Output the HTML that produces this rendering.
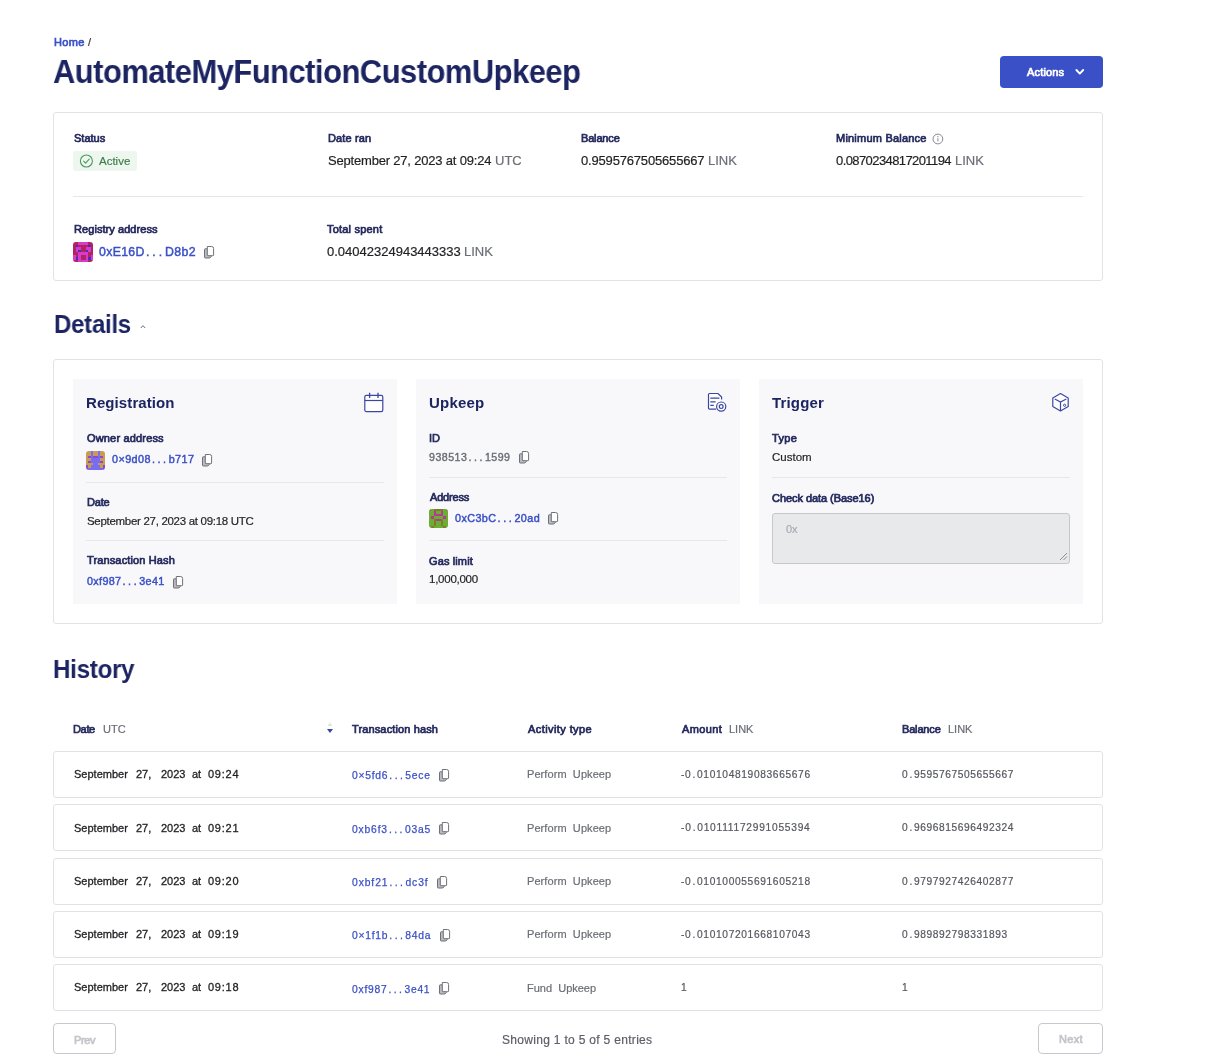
<!DOCTYPE html>
<html><head><meta charset="utf-8">
<style>
*{box-sizing:border-box;margin:0;padding:0}
html,body{width:1208px;height:1064px;overflow:hidden;background:#fff;font-family:"Liberation Sans",sans-serif;color:#1f2023}
.a{position:absolute}
.t{position:absolute;white-space:nowrap;line-height:1;will-change:transform}
.card{position:absolute;border:1px solid #e2e3e6;border-radius:3px;background:#fff}
.hr{position:absolute;height:1px;background:#e6e7eb}
.inner{position:absolute;background:#f8f8fa}
.row{position:absolute;left:53px;width:1050px;height:47px;border:1px solid #e1e2e5;border-radius:3px;background:#fff}
.btn{position:absolute;border:1px solid #c8c9ce;border-radius:4px;background:#fff}
.cp{position:absolute}
.dt{letter-spacing:0.24em;margin-left:0.1em}
.d1{letter-spacing:0.17em;margin-left:0.11em}
</style></head><body>
<div class="a" style="left:1000px;top:56px;width:103px;height:32px;background:#3a50c6;border-radius:4px"></div>
<svg class="a" style="left:1074px;top:67px" width="12" height="10" viewBox="0 0 12 10"><path d="M2.4 3 L5.8 6.6 L9.2 3" fill="none" stroke="#fff" stroke-width="1.9" stroke-linecap="round" stroke-linejoin="round"/></svg>
<div class="card" style="left:53px;top:112px;width:1050px;height:169px"></div>
<div class="a" style="left:73px;top:151px;width:64px;height:20px;background:#eef6f0;border-radius:3px"></div>
<svg class="a" style="left:79px;top:154px" width="15" height="14" viewBox="0 0 15 14"><circle cx="7.4" cy="7" r="6" fill="none" stroke="#4d9a5c" stroke-width="1.1"/><path d="M4.6 7.1 L6.6 9.1 L10.2 5.2" fill="none" stroke="#4d9a5c" stroke-width="1.1" stroke-linecap="round" stroke-linejoin="round"/></svg>
<svg class="a" style="left:932.3px;top:133px" width="12" height="12" viewBox="0 0 12 12"><circle cx="5.9" cy="6" r="4.9" fill="none" stroke="#7a7c84" stroke-width="0.9"/><path d="M5.9 5.2 V8.4" stroke="#7a7c84" stroke-width="0.9"/><circle cx="5.9" cy="3.7" r="0.6" fill="#7a7c84"/></svg>
<div class="hr" style="left:73px;top:196px;width:1010px"></div>
<svg class="a" style="left:73px;top:242px" width="20" height="20" viewBox="0 0 20 20"><defs><clipPath id="clip73_242"><rect width="20" height="20" rx="3"/></clipPath></defs><g clip-path="url(#clip73_242)" shape-rendering="crispEdges"><rect x="0.000" y="0.000" width="2.550" height="2.550" fill="#b2245e"/><rect x="2.500" y="0.000" width="2.550" height="2.550" fill="#b2245e"/><rect x="5.000" y="0.000" width="2.550" height="2.550" fill="#d83acd"/><rect x="7.500" y="0.000" width="2.550" height="2.550" fill="#d83acd"/><rect x="10.000" y="0.000" width="2.550" height="2.550" fill="#d83acd"/><rect x="12.500" y="0.000" width="2.550" height="2.550" fill="#d83acd"/><rect x="15.000" y="0.000" width="2.550" height="2.550" fill="#b2245e"/><rect x="17.500" y="0.000" width="2.550" height="2.550" fill="#b2245e"/><rect x="0.000" y="2.500" width="2.550" height="2.550" fill="#b2245e"/><rect x="2.500" y="2.500" width="2.550" height="2.550" fill="#4b2bc4"/><rect x="5.000" y="2.500" width="2.550" height="2.550" fill="#b2245e"/><rect x="7.500" y="2.500" width="2.550" height="2.550" fill="#b2245e"/><rect x="10.000" y="2.500" width="2.550" height="2.550" fill="#b2245e"/><rect x="12.500" y="2.500" width="2.550" height="2.550" fill="#b2245e"/><rect x="15.000" y="2.500" width="2.550" height="2.550" fill="#4b2bc4"/><rect x="17.500" y="2.500" width="2.550" height="2.550" fill="#b2245e"/><rect x="0.000" y="5.000" width="2.550" height="2.550" fill="#b2245e"/><rect x="2.500" y="5.000" width="2.550" height="2.550" fill="#d83acd"/><rect x="5.000" y="5.000" width="2.550" height="2.550" fill="#d83acd"/><rect x="7.500" y="5.000" width="2.550" height="2.550" fill="#b2245e"/><rect x="10.000" y="5.000" width="2.550" height="2.550" fill="#b2245e"/><rect x="12.500" y="5.000" width="2.550" height="2.550" fill="#d83acd"/><rect x="15.000" y="5.000" width="2.550" height="2.550" fill="#d83acd"/><rect x="17.500" y="5.000" width="2.550" height="2.550" fill="#b2245e"/><rect x="0.000" y="7.500" width="2.550" height="2.550" fill="#b2245e"/><rect x="2.500" y="7.500" width="2.550" height="2.550" fill="#d83acd"/><rect x="5.000" y="7.500" width="2.550" height="2.550" fill="#4b2bc4"/><rect x="7.500" y="7.500" width="2.550" height="2.550" fill="#b2245e"/><rect x="10.000" y="7.500" width="2.550" height="2.550" fill="#b2245e"/><rect x="12.500" y="7.500" width="2.550" height="2.550" fill="#4b2bc4"/><rect x="15.000" y="7.500" width="2.550" height="2.550" fill="#d83acd"/><rect x="17.500" y="7.500" width="2.550" height="2.550" fill="#b2245e"/><rect x="0.000" y="10.000" width="2.550" height="2.550" fill="#b2245e"/><rect x="2.500" y="10.000" width="2.550" height="2.550" fill="#b2245e"/><rect x="5.000" y="10.000" width="2.550" height="2.550" fill="#d83acd"/><rect x="7.500" y="10.000" width="2.550" height="2.550" fill="#d83acd"/><rect x="10.000" y="10.000" width="2.550" height="2.550" fill="#d83acd"/><rect x="12.500" y="10.000" width="2.550" height="2.550" fill="#d83acd"/><rect x="15.000" y="10.000" width="2.550" height="2.550" fill="#b2245e"/><rect x="17.500" y="10.000" width="2.550" height="2.550" fill="#b2245e"/><rect x="0.000" y="12.500" width="2.550" height="2.550" fill="#d83acd"/><rect x="2.500" y="12.500" width="2.550" height="2.550" fill="#b2245e"/><rect x="5.000" y="12.500" width="2.550" height="2.550" fill="#d83acd"/><rect x="7.500" y="12.500" width="2.550" height="2.550" fill="#b2245e"/><rect x="10.000" y="12.500" width="2.550" height="2.550" fill="#b2245e"/><rect x="12.500" y="12.500" width="2.550" height="2.550" fill="#d83acd"/><rect x="15.000" y="12.500" width="2.550" height="2.550" fill="#b2245e"/><rect x="17.500" y="12.500" width="2.550" height="2.550" fill="#d83acd"/><rect x="0.000" y="15.000" width="2.550" height="2.550" fill="#d83acd"/><rect x="2.500" y="15.000" width="2.550" height="2.550" fill="#4b2bc4"/><rect x="5.000" y="15.000" width="2.550" height="2.550" fill="#d83acd"/><rect x="7.500" y="15.000" width="2.550" height="2.550" fill="#b2245e"/><rect x="10.000" y="15.000" width="2.550" height="2.550" fill="#b2245e"/><rect x="12.500" y="15.000" width="2.550" height="2.550" fill="#d83acd"/><rect x="15.000" y="15.000" width="2.550" height="2.550" fill="#4b2bc4"/><rect x="17.500" y="15.000" width="2.550" height="2.550" fill="#d83acd"/><rect x="0.000" y="17.500" width="2.550" height="2.550" fill="#b2245e"/><rect x="2.500" y="17.500" width="2.550" height="2.550" fill="#b2245e"/><rect x="5.000" y="17.500" width="2.550" height="2.550" fill="#d83acd"/><rect x="7.500" y="17.500" width="2.550" height="2.550" fill="#d83acd"/><rect x="10.000" y="17.500" width="2.550" height="2.550" fill="#d83acd"/><rect x="12.500" y="17.500" width="2.550" height="2.550" fill="#d83acd"/><rect x="15.000" y="17.500" width="2.550" height="2.550" fill="#b2245e"/><rect x="17.500" y="17.500" width="2.550" height="2.550" fill="#b2245e"/></g></svg>
<svg class="cp" style="left:203.7px;top:245.50px" width="11" height="13" viewBox="0 0 11 13"><path d="M3.3 2.8 H1.2 Q0.5 2.8 0.5 3.5 V11.3 Q0.5 12 1.2 12 H5.8 L7.3 10.5 V9.7" fill="#b9bbc1" stroke="#6f7179" stroke-width="1"/><path d="M3.3 0.5 H7.6 Q9.6 0.5 9.6 2.5 V9.0 Q9.6 9.7 8.9 9.7 H4.0 Q3.3 9.7 3.3 9.0 Z" fill="#fff" stroke="#6f7179" stroke-width="1"/></svg>
<svg class="a" style="left:138.5px;top:322.5px" width="8" height="7" viewBox="0 0 8 7"><path d="M1.8 5 L4 2.7 L6.2 5" fill="none" stroke="#6d6f77" stroke-width="1"/></svg>
<div class="card" style="left:53px;top:359px;width:1050px;height:265px"></div>
<div class="inner" style="left:73px;top:379px;width:324px;height:225px"></div>
<div class="inner" style="left:416px;top:379px;width:324px;height:225px"></div>
<div class="inner" style="left:759px;top:379px;width:324px;height:225px"></div>
<svg class="a" style="left:363px;top:392px" width="22" height="21" viewBox="0 0 22 21"><rect x="1.8" y="3.4" width="18" height="16.2" rx="1.6" fill="#fff" stroke="#3b46a3" stroke-width="1.2"/><path d="M1.8 8.5 H19.8" stroke="#3b46a3" stroke-width="1.2"/><path d="M6.6 0.8 V6 M15 0.8 V6" stroke="#3b46a3" stroke-width="1.3"/></svg>
<svg class="a" style="left:707px;top:392px" width="21" height="21" viewBox="0 0 21 21"><path d="M9.2 17.2 H2.6 a1.1 1.1 0 0 1 -1.1 -1.1 V2.6 a1.1 1.1 0 0 1 1.1 -1.1 H11 L14.6 5.1 V7.6" fill="#fff" stroke="#3b46a3" stroke-width="1.2"/><path d="M3.3 6.2 H12.4 M3.3 9.9 H8.6 M3.3 13.4 H6.8" stroke="#3b46a3" stroke-width="1.2"/><circle cx="14.2" cy="14.6" r="4.6" fill="#fff" stroke="#3b46a3" stroke-width="1.2"/><circle cx="14.2" cy="14.6" r="1.9" fill="none" stroke="#3b46a3" stroke-width="1.2"/></svg>
<svg class="a" style="left:1051px;top:392px" width="19" height="21" viewBox="0 0 19 21"><path d="M9.5 1.5 L1.8 5.9 V14.4 L9.5 18.9 L17.2 14.4 V5.9 Z" fill="#fff" stroke="#3b46a3" stroke-width="1.2" stroke-linejoin="round"/><path d="M3.8 7 L9.5 10.1 L15.3 7 M9.5 10.1 V18.9" fill="none" stroke="#3b46a3" stroke-width="1.2"/><circle cx="13.6" cy="13.3" r="1.1" fill="none" stroke="#3b46a3" stroke-width="1"/></svg>
<div class="hr" style="left:86px;top:482px;width:298px"></div>
<div class="hr" style="left:86px;top:540px;width:298px"></div>
<div class="hr" style="left:429px;top:477px;width:298px"></div>
<div class="hr" style="left:429px;top:540px;width:298px"></div>
<div class="hr" style="left:772px;top:477px;width:298px"></div>
<svg class="a" style="left:86px;top:451px" width="19" height="19" viewBox="0 0 19 19"><defs><clipPath id="clip86_451"><rect width="19" height="19" rx="3"/></clipPath></defs><g clip-path="url(#clip86_451)" shape-rendering="crispEdges"><rect x="0.000" y="0.000" width="2.425" height="2.425" fill="#c79c55"/><rect x="2.375" y="0.000" width="2.425" height="2.425" fill="#c79c55"/><rect x="4.750" y="0.000" width="2.425" height="2.425" fill="#7a6cf0"/><rect x="7.125" y="0.000" width="2.425" height="2.425" fill="#c79c55"/><rect x="9.500" y="0.000" width="2.425" height="2.425" fill="#c79c55"/><rect x="11.875" y="0.000" width="2.425" height="2.425" fill="#7a6cf0"/><rect x="14.250" y="0.000" width="2.425" height="2.425" fill="#c79c55"/><rect x="16.625" y="0.000" width="2.425" height="2.425" fill="#c79c55"/><rect x="0.000" y="2.375" width="2.425" height="2.425" fill="#c79c55"/><rect x="2.375" y="2.375" width="2.425" height="2.425" fill="#c79c55"/><rect x="4.750" y="2.375" width="2.425" height="2.425" fill="#7a6cf0"/><rect x="7.125" y="2.375" width="2.425" height="2.425" fill="#c79c55"/><rect x="9.500" y="2.375" width="2.425" height="2.425" fill="#c79c55"/><rect x="11.875" y="2.375" width="2.425" height="2.425" fill="#7a6cf0"/><rect x="14.250" y="2.375" width="2.425" height="2.425" fill="#c79c55"/><rect x="16.625" y="2.375" width="2.425" height="2.425" fill="#c79c55"/><rect x="0.000" y="4.750" width="2.425" height="2.425" fill="#c79c55"/><rect x="2.375" y="4.750" width="2.425" height="2.425" fill="#9048d0"/><rect x="4.750" y="4.750" width="2.425" height="2.425" fill="#7a6cf0"/><rect x="7.125" y="4.750" width="2.425" height="2.425" fill="#9048d0"/><rect x="9.500" y="4.750" width="2.425" height="2.425" fill="#9048d0"/><rect x="11.875" y="4.750" width="2.425" height="2.425" fill="#7a6cf0"/><rect x="14.250" y="4.750" width="2.425" height="2.425" fill="#9048d0"/><rect x="16.625" y="4.750" width="2.425" height="2.425" fill="#c79c55"/><rect x="0.000" y="7.125" width="2.425" height="2.425" fill="#c79c55"/><rect x="2.375" y="7.125" width="2.425" height="2.425" fill="#c79c55"/><rect x="4.750" y="7.125" width="2.425" height="2.425" fill="#7a6cf0"/><rect x="7.125" y="7.125" width="2.425" height="2.425" fill="#7a6cf0"/><rect x="9.500" y="7.125" width="2.425" height="2.425" fill="#7a6cf0"/><rect x="11.875" y="7.125" width="2.425" height="2.425" fill="#7a6cf0"/><rect x="14.250" y="7.125" width="2.425" height="2.425" fill="#c79c55"/><rect x="16.625" y="7.125" width="2.425" height="2.425" fill="#c79c55"/><rect x="0.000" y="9.500" width="2.425" height="2.425" fill="#c79c55"/><rect x="2.375" y="9.500" width="2.425" height="2.425" fill="#9048d0"/><rect x="4.750" y="9.500" width="2.425" height="2.425" fill="#7a6cf0"/><rect x="7.125" y="9.500" width="2.425" height="2.425" fill="#7a6cf0"/><rect x="9.500" y="9.500" width="2.425" height="2.425" fill="#7a6cf0"/><rect x="11.875" y="9.500" width="2.425" height="2.425" fill="#7a6cf0"/><rect x="14.250" y="9.500" width="2.425" height="2.425" fill="#9048d0"/><rect x="16.625" y="9.500" width="2.425" height="2.425" fill="#c79c55"/><rect x="0.000" y="11.875" width="2.425" height="2.425" fill="#c79c55"/><rect x="2.375" y="11.875" width="2.425" height="2.425" fill="#c79c55"/><rect x="4.750" y="11.875" width="2.425" height="2.425" fill="#c79c55"/><rect x="7.125" y="11.875" width="2.425" height="2.425" fill="#7a6cf0"/><rect x="9.500" y="11.875" width="2.425" height="2.425" fill="#7a6cf0"/><rect x="11.875" y="11.875" width="2.425" height="2.425" fill="#c79c55"/><rect x="14.250" y="11.875" width="2.425" height="2.425" fill="#c79c55"/><rect x="16.625" y="11.875" width="2.425" height="2.425" fill="#c79c55"/><rect x="0.000" y="14.250" width="2.425" height="2.425" fill="#9048d0"/><rect x="2.375" y="14.250" width="2.425" height="2.425" fill="#c79c55"/><rect x="4.750" y="14.250" width="2.425" height="2.425" fill="#7a6cf0"/><rect x="7.125" y="14.250" width="2.425" height="2.425" fill="#7a6cf0"/><rect x="9.500" y="14.250" width="2.425" height="2.425" fill="#7a6cf0"/><rect x="11.875" y="14.250" width="2.425" height="2.425" fill="#7a6cf0"/><rect x="14.250" y="14.250" width="2.425" height="2.425" fill="#c79c55"/><rect x="16.625" y="14.250" width="2.425" height="2.425" fill="#9048d0"/><rect x="0.000" y="16.625" width="2.425" height="2.425" fill="#9048d0"/><rect x="2.375" y="16.625" width="2.425" height="2.425" fill="#7a6cf0"/><rect x="4.750" y="16.625" width="2.425" height="2.425" fill="#7a6cf0"/><rect x="7.125" y="16.625" width="2.425" height="2.425" fill="#7a6cf0"/><rect x="9.500" y="16.625" width="2.425" height="2.425" fill="#7a6cf0"/><rect x="11.875" y="16.625" width="2.425" height="2.425" fill="#7a6cf0"/><rect x="14.250" y="16.625" width="2.425" height="2.425" fill="#7a6cf0"/><rect x="16.625" y="16.625" width="2.425" height="2.425" fill="#9048d0"/></g></svg>
<svg class="a" style="left:429px;top:509px" width="19" height="19" viewBox="0 0 19 19"><defs><clipPath id="clip429_509"><rect width="19" height="19" rx="3"/></clipPath></defs><g clip-path="url(#clip429_509)" shape-rendering="crispEdges"><rect x="0.000" y="0.000" width="2.425" height="2.425" fill="#7f7a2c"/><rect x="2.375" y="0.000" width="2.425" height="2.425" fill="#6cad34"/><rect x="4.750" y="0.000" width="2.425" height="2.425" fill="#7f7a2c"/><rect x="7.125" y="0.000" width="2.425" height="2.425" fill="#7f7a2c"/><rect x="9.500" y="0.000" width="2.425" height="2.425" fill="#7f7a2c"/><rect x="11.875" y="0.000" width="2.425" height="2.425" fill="#7f7a2c"/><rect x="14.250" y="0.000" width="2.425" height="2.425" fill="#6cad34"/><rect x="16.625" y="0.000" width="2.425" height="2.425" fill="#7f7a2c"/><rect x="0.000" y="2.375" width="2.425" height="2.425" fill="#6cad34"/><rect x="2.375" y="2.375" width="2.425" height="2.425" fill="#6cad34"/><rect x="4.750" y="2.375" width="2.425" height="2.425" fill="#b53a94"/><rect x="7.125" y="2.375" width="2.425" height="2.425" fill="#6cad34"/><rect x="9.500" y="2.375" width="2.425" height="2.425" fill="#6cad34"/><rect x="11.875" y="2.375" width="2.425" height="2.425" fill="#b53a94"/><rect x="14.250" y="2.375" width="2.425" height="2.425" fill="#6cad34"/><rect x="16.625" y="2.375" width="2.425" height="2.425" fill="#6cad34"/><rect x="0.000" y="4.750" width="2.425" height="2.425" fill="#6cad34"/><rect x="2.375" y="4.750" width="2.425" height="2.425" fill="#6cad34"/><rect x="4.750" y="4.750" width="2.425" height="2.425" fill="#b53a94"/><rect x="7.125" y="4.750" width="2.425" height="2.425" fill="#b53a94"/><rect x="9.500" y="4.750" width="2.425" height="2.425" fill="#b53a94"/><rect x="11.875" y="4.750" width="2.425" height="2.425" fill="#b53a94"/><rect x="14.250" y="4.750" width="2.425" height="2.425" fill="#6cad34"/><rect x="16.625" y="4.750" width="2.425" height="2.425" fill="#6cad34"/><rect x="0.000" y="7.125" width="2.425" height="2.425" fill="#6cad34"/><rect x="2.375" y="7.125" width="2.425" height="2.425" fill="#b53a94"/><rect x="4.750" y="7.125" width="2.425" height="2.425" fill="#6cad34"/><rect x="7.125" y="7.125" width="2.425" height="2.425" fill="#6cad34"/><rect x="9.500" y="7.125" width="2.425" height="2.425" fill="#6cad34"/><rect x="11.875" y="7.125" width="2.425" height="2.425" fill="#6cad34"/><rect x="14.250" y="7.125" width="2.425" height="2.425" fill="#b53a94"/><rect x="16.625" y="7.125" width="2.425" height="2.425" fill="#6cad34"/><rect x="0.000" y="9.500" width="2.425" height="2.425" fill="#6cad34"/><rect x="2.375" y="9.500" width="2.425" height="2.425" fill="#6cad34"/><rect x="4.750" y="9.500" width="2.425" height="2.425" fill="#7f7a2c"/><rect x="7.125" y="9.500" width="2.425" height="2.425" fill="#b53a94"/><rect x="9.500" y="9.500" width="2.425" height="2.425" fill="#b53a94"/><rect x="11.875" y="9.500" width="2.425" height="2.425" fill="#7f7a2c"/><rect x="14.250" y="9.500" width="2.425" height="2.425" fill="#6cad34"/><rect x="16.625" y="9.500" width="2.425" height="2.425" fill="#6cad34"/><rect x="0.000" y="11.875" width="2.425" height="2.425" fill="#6cad34"/><rect x="2.375" y="11.875" width="2.425" height="2.425" fill="#6cad34"/><rect x="4.750" y="11.875" width="2.425" height="2.425" fill="#7f7a2c"/><rect x="7.125" y="11.875" width="2.425" height="2.425" fill="#6cad34"/><rect x="9.500" y="11.875" width="2.425" height="2.425" fill="#6cad34"/><rect x="11.875" y="11.875" width="2.425" height="2.425" fill="#7f7a2c"/><rect x="14.250" y="11.875" width="2.425" height="2.425" fill="#6cad34"/><rect x="16.625" y="11.875" width="2.425" height="2.425" fill="#6cad34"/><rect x="0.000" y="14.250" width="2.425" height="2.425" fill="#6cad34"/><rect x="2.375" y="14.250" width="2.425" height="2.425" fill="#6cad34"/><rect x="4.750" y="14.250" width="2.425" height="2.425" fill="#7f7a2c"/><rect x="7.125" y="14.250" width="2.425" height="2.425" fill="#6cad34"/><rect x="9.500" y="14.250" width="2.425" height="2.425" fill="#6cad34"/><rect x="11.875" y="14.250" width="2.425" height="2.425" fill="#7f7a2c"/><rect x="14.250" y="14.250" width="2.425" height="2.425" fill="#6cad34"/><rect x="16.625" y="14.250" width="2.425" height="2.425" fill="#6cad34"/><rect x="0.000" y="16.625" width="2.425" height="2.425" fill="#6cad34"/><rect x="2.375" y="16.625" width="2.425" height="2.425" fill="#7f7a2c"/><rect x="4.750" y="16.625" width="2.425" height="2.425" fill="#6cad34"/><rect x="7.125" y="16.625" width="2.425" height="2.425" fill="#6cad34"/><rect x="9.500" y="16.625" width="2.425" height="2.425" fill="#6cad34"/><rect x="11.875" y="16.625" width="2.425" height="2.425" fill="#6cad34"/><rect x="14.250" y="16.625" width="2.425" height="2.425" fill="#7f7a2c"/><rect x="16.625" y="16.625" width="2.425" height="2.425" fill="#6cad34"/></g></svg>
<svg class="cp" style="left:201.8px;top:454.30px" width="11" height="13" viewBox="0 0 11 13"><path d="M3.3 2.8 H1.2 Q0.5 2.8 0.5 3.5 V11.3 Q0.5 12 1.2 12 H5.8 L7.3 10.5 V9.7" fill="#b9bbc1" stroke="#6f7179" stroke-width="1"/><path d="M3.3 0.5 H7.6 Q9.6 0.5 9.6 2.5 V9.0 Q9.6 9.7 8.9 9.7 H4.0 Q3.3 9.7 3.3 9.0 Z" fill="#fff" stroke="#6f7179" stroke-width="1"/></svg>
<svg class="cp" style="left:173px;top:576.30px" width="11" height="13" viewBox="0 0 11 13"><path d="M3.3 2.8 H1.2 Q0.5 2.8 0.5 3.5 V11.3 Q0.5 12 1.2 12 H5.8 L7.3 10.5 V9.7" fill="#b9bbc1" stroke="#6f7179" stroke-width="1"/><path d="M3.3 0.5 H7.6 Q9.6 0.5 9.6 2.5 V9.0 Q9.6 9.7 8.9 9.7 H4.0 Q3.3 9.7 3.3 9.0 Z" fill="#fff" stroke="#6f7179" stroke-width="1"/></svg>
<svg class="cp" style="left:518.8px;top:451.30px" width="11" height="13" viewBox="0 0 11 13"><path d="M3.3 2.8 H1.2 Q0.5 2.8 0.5 3.5 V11.3 Q0.5 12 1.2 12 H5.8 L7.3 10.5 V9.7" fill="#b9bbc1" stroke="#6f7179" stroke-width="1"/><path d="M3.3 0.5 H7.6 Q9.6 0.5 9.6 2.5 V9.0 Q9.6 9.7 8.9 9.7 H4.0 Q3.3 9.7 3.3 9.0 Z" fill="#fff" stroke="#6f7179" stroke-width="1"/></svg>
<svg class="cp" style="left:547.9px;top:512.30px" width="11" height="13" viewBox="0 0 11 13"><path d="M3.3 2.8 H1.2 Q0.5 2.8 0.5 3.5 V11.3 Q0.5 12 1.2 12 H5.8 L7.3 10.5 V9.7" fill="#b9bbc1" stroke="#6f7179" stroke-width="1"/><path d="M3.3 0.5 H7.6 Q9.6 0.5 9.6 2.5 V9.0 Q9.6 9.7 8.9 9.7 H4.0 Q3.3 9.7 3.3 9.0 Z" fill="#fff" stroke="#6f7179" stroke-width="1"/></svg>
<div class="a" style="left:772px;top:513px;width:298px;height:51px;background:#e8e9eb;border:1px solid #c6c8ce;border-radius:3px"></div>
<svg class="a" style="left:1059px;top:552px" width="9" height="9" viewBox="0 0 9 9"><path d="M1 8 L8 1 M4.5 8 L8 4.5" stroke="#808288" stroke-width="0.9"/></svg>
<svg class="a" style="left:326px;top:721px" width="8" height="13" viewBox="0 0 8 13"><path d="M1.4 4.9 L4 1.6 L6.6 4.9 Z" fill="#e3e1e8"/><path d="M1 8.1 L7 8.1 L4 12 Z" fill="#3943a6"/></svg>
<div class="row" style="top:751px"></div>
<svg class="cp" style="left:438.8px;top:768.90px" width="11" height="13" viewBox="0 0 11 13"><path d="M3.3 2.8 H1.2 Q0.5 2.8 0.5 3.5 V11.3 Q0.5 12 1.2 12 H5.8 L7.3 10.5 V9.7" fill="#b9bbc1" stroke="#6f7179" stroke-width="1"/><path d="M3.3 0.5 H7.6 Q9.6 0.5 9.6 2.5 V9.0 Q9.6 9.7 8.9 9.7 H4.0 Q3.3 9.7 3.3 9.0 Z" fill="#fff" stroke="#6f7179" stroke-width="1"/></svg>
<div class="row" style="top:804px"></div>
<svg class="cp" style="left:438.8px;top:821.90px" width="11" height="13" viewBox="0 0 11 13"><path d="M3.3 2.8 H1.2 Q0.5 2.8 0.5 3.5 V11.3 Q0.5 12 1.2 12 H5.8 L7.3 10.5 V9.7" fill="#b9bbc1" stroke="#6f7179" stroke-width="1"/><path d="M3.3 0.5 H7.6 Q9.6 0.5 9.6 2.5 V9.0 Q9.6 9.7 8.9 9.7 H4.0 Q3.3 9.7 3.3 9.0 Z" fill="#fff" stroke="#6f7179" stroke-width="1"/></svg>
<div class="row" style="top:858px"></div>
<svg class="cp" style="left:436.8px;top:875.90px" width="11" height="13" viewBox="0 0 11 13"><path d="M3.3 2.8 H1.2 Q0.5 2.8 0.5 3.5 V11.3 Q0.5 12 1.2 12 H5.8 L7.3 10.5 V9.7" fill="#b9bbc1" stroke="#6f7179" stroke-width="1"/><path d="M3.3 0.5 H7.6 Q9.6 0.5 9.6 2.5 V9.0 Q9.6 9.7 8.9 9.7 H4.0 Q3.3 9.7 3.3 9.0 Z" fill="#fff" stroke="#6f7179" stroke-width="1"/></svg>
<div class="row" style="top:911px"></div>
<svg class="cp" style="left:439.8px;top:928.90px" width="11" height="13" viewBox="0 0 11 13"><path d="M3.3 2.8 H1.2 Q0.5 2.8 0.5 3.5 V11.3 Q0.5 12 1.2 12 H5.8 L7.3 10.5 V9.7" fill="#b9bbc1" stroke="#6f7179" stroke-width="1"/><path d="M3.3 0.5 H7.6 Q9.6 0.5 9.6 2.5 V9.0 Q9.6 9.7 8.9 9.7 H4.0 Q3.3 9.7 3.3 9.0 Z" fill="#fff" stroke="#6f7179" stroke-width="1"/></svg>
<div class="row" style="top:964px"></div>
<svg class="cp" style="left:438.8px;top:981.90px" width="11" height="13" viewBox="0 0 11 13"><path d="M3.3 2.8 H1.2 Q0.5 2.8 0.5 3.5 V11.3 Q0.5 12 1.2 12 H5.8 L7.3 10.5 V9.7" fill="#b9bbc1" stroke="#6f7179" stroke-width="1"/><path d="M3.3 0.5 H7.6 Q9.6 0.5 9.6 2.5 V9.0 Q9.6 9.7 8.9 9.7 H4.0 Q3.3 9.7 3.3 9.0 Z" fill="#fff" stroke="#6f7179" stroke-width="1"/></svg>
<div class="btn" style="left:53px;top:1023px;width:63px;height:31px"></div>
<div class="btn" style="left:1038px;top:1023px;width:65px;height:31px"></div>
<div id="home" class="t" style="left:53.60px;top:37.01px;font-size:11px;font-weight:400;color:#3a50c6;font-family:'Liberation Sans',sans-serif;letter-spacing:0.333px;-webkit-text-stroke:0.7px #3a50c6;">Home</div>
<div id="slash" class="t" style="left:88.00px;top:37.01px;font-size:11px;font-weight:400;color:#333;font-family:'Liberation Sans',sans-serif;letter-spacing:0.000px;-webkit-text-stroke:0.2px #333;">/</div>
<div id="title" class="t" style="left:52.60px;top:55.00px;font-size:33px;font-weight:700;color:#1c2561;font-family:'Liberation Sans',sans-serif;letter-spacing:-0.500px;transform:scaleX(0.9346);transform-origin:0 0;">AutomateMyFunctionCustomUpkeep</div>
<div id="actions" class="t" style="left:1026.70px;top:67.01px;font-size:11px;font-weight:400;color:#fff;font-family:'Liberation Sans',sans-serif;letter-spacing:0.167px;-webkit-text-stroke:0.7px #fff;">Actions</div>
<div id="l_status" class="t" style="left:73.90px;top:133.01px;font-size:11px;font-weight:400;color:#252a5e;font-family:'Liberation Sans',sans-serif;letter-spacing:-0.000px;-webkit-text-stroke:0.7px #252a5e;">Status</div>
<div id="active" class="t" style="left:99.20px;top:156.01px;font-size:11.5px;font-weight:400;color:#3b7a48;font-family:'Liberation Sans',sans-serif;letter-spacing:0.000px;-webkit-text-stroke:0.15px #3b7a48;">Active</div>
<div id="l_date" class="t" style="left:327.50px;top:133.01px;font-size:11px;font-weight:400;color:#252a5e;font-family:'Liberation Sans',sans-serif;letter-spacing:0.143px;-webkit-text-stroke:0.7px #252a5e;">Date ran</div>
<div id="v_date" class="t" style="left:327.50px;top:154.01px;font-size:13px;font-weight:400;color:#1f2023;font-family:'Liberation Sans',sans-serif;letter-spacing:-0.192px;-webkit-text-stroke:0.2px #1f2023;">September 27, 2023 at 09:24</div>
<div id="v_date_u" class="t" style="left:495.00px;top:154.01px;font-size:13px;font-weight:400;color:#6b6e76;font-family:'Liberation Sans',sans-serif;letter-spacing:0.000px;-webkit-text-stroke:0.2px #6b6e76;">UTC</div>
<div id="l_bal" class="t" style="left:581.30px;top:133.01px;font-size:11px;font-weight:400;color:#252a5e;font-family:'Liberation Sans',sans-serif;letter-spacing:-0.167px;-webkit-text-stroke:0.7px #252a5e;">Balance</div>
<div id="v_bal" class="t" style="left:581.30px;top:154.01px;font-size:13px;font-weight:400;color:#1f2023;font-family:'Liberation Sans',sans-serif;letter-spacing:-0.176px;-webkit-text-stroke:0.2px #1f2023;">0.9595767505655667</div>
<div id="v_bal_u" class="t" style="left:707.50px;top:154.01px;font-size:13px;font-weight:400;color:#6b6e76;font-family:'Liberation Sans',sans-serif;letter-spacing:-0.000px;-webkit-text-stroke:0.2px #6b6e76;">LINK</div>
<div id="l_min" class="t" style="left:835.60px;top:133.01px;font-size:11px;font-weight:400;color:#252a5e;font-family:'Liberation Sans',sans-serif;letter-spacing:0.214px;-webkit-text-stroke:0.7px #252a5e;">Minimum Balance</div>
<div id="v_min" class="t" style="left:835.60px;top:154.01px;font-size:13px;font-weight:400;color:#1f2023;font-family:'Liberation Sans',sans-serif;letter-spacing:-0.588px;-webkit-text-stroke:0.2px #1f2023;">0.0870234817201194</div>
<div id="v_min_u" class="t" style="left:954.50px;top:154.01px;font-size:13px;font-weight:400;color:#6b6e76;font-family:'Liberation Sans',sans-serif;letter-spacing:0.000px;-webkit-text-stroke:0.2px #6b6e76;">LINK</div>
<div id="l_reg" class="t" style="left:73.90px;top:224.01px;font-size:11px;font-weight:400;color:#252a5e;font-family:'Liberation Sans',sans-serif;letter-spacing:0.067px;-webkit-text-stroke:0.7px #252a5e;">Registry address</div>
<div id="v_reg" class="t" style="left:99.30px;top:246.00px;font-size:12.3px;font-weight:400;color:#3a50c6;font-family:'Liberation Sans',sans-serif;letter-spacing:0.333px;-webkit-text-stroke:0.45px #3a50c6;">0xE16D<span class="dt">...</span>D8b2</div>
<div id="l_tot" class="t" style="left:327.40px;top:224.01px;font-size:11px;font-weight:400;color:#252a5e;font-family:'Liberation Sans',sans-serif;letter-spacing:0.200px;-webkit-text-stroke:0.7px #252a5e;">Total spent</div>
<div id="v_tot" class="t" style="left:327.40px;top:245.01px;font-size:13px;font-weight:400;color:#1f2023;font-family:'Liberation Sans',sans-serif;letter-spacing:0.000px;-webkit-text-stroke:0.2px #1f2023;">0.04042324943443333</div>
<div id="v_tot_u" class="t" style="left:464.00px;top:245.01px;font-size:13px;font-weight:400;color:#6b6e76;font-family:'Liberation Sans',sans-serif;letter-spacing:0.000px;-webkit-text-stroke:0.2px #6b6e76;">LINK</div>
<div id="details" class="t" style="left:53.90px;top:312.01px;font-size:25px;font-weight:700;color:#1c2561;font-family:'Liberation Sans',sans-serif;letter-spacing:-0.300px;transform:scaleX(0.9615);transform-origin:0 0;">Details</div>
<div id="h_reg" class="t" style="left:85.80px;top:395.00px;font-size:15px;font-weight:700;color:#1c2561;font-family:'Liberation Sans',sans-serif;letter-spacing:0.091px;">Registration</div>
<div id="h_upk" class="t" style="left:429.30px;top:395.00px;font-size:15px;font-weight:700;color:#1c2561;font-family:'Liberation Sans',sans-serif;letter-spacing:0.200px;">Upkeep</div>
<div id="h_trg" class="t" style="left:772.00px;top:395.00px;font-size:15px;font-weight:700;color:#1c2561;font-family:'Liberation Sans',sans-serif;letter-spacing:0.167px;">Trigger</div>
<div id="l_owner" class="t" style="left:86.80px;top:433.00px;font-size:11px;font-weight:400;color:#252a5e;font-family:'Liberation Sans',sans-serif;letter-spacing:0.167px;-webkit-text-stroke:0.7px #252a5e;">Owner address</div>
<div id="v_owner" class="t" style="left:111.80px;top:454.00px;font-size:10.8px;font-weight:400;color:#3a50c6;font-family:'Liberation Sans',sans-serif;letter-spacing:0.417px;-webkit-text-stroke:0.45px #3a50c6;">0×9d08<span class="dt">...</span>b717</div>
<div id="l_rdate" class="t" style="left:86.50px;top:497.00px;font-size:11px;font-weight:400;color:#252a5e;font-family:'Liberation Sans',sans-serif;letter-spacing:-0.167px;-webkit-text-stroke:0.7px #252a5e;">Date</div>
<div id="v_rdate" class="t" style="left:86.50px;top:516.01px;font-size:11.5px;font-weight:400;color:#1f2023;font-family:'Liberation Sans',sans-serif;letter-spacing:-0.300px;-webkit-text-stroke:0.2px #1f2023;">September 27, 2023 at 09:18 UTC</div>
<div id="l_txh" class="t" style="left:86.50px;top:555.00px;font-size:11px;font-weight:400;color:#252a5e;font-family:'Liberation Sans',sans-serif;letter-spacing:0.133px;-webkit-text-stroke:0.7px #252a5e;">Transaction Hash</div>
<div id="v_txh" class="t" style="left:86.60px;top:576.00px;font-size:10.8px;font-weight:400;color:#3a50c6;font-family:'Liberation Sans',sans-serif;letter-spacing:0.333px;-webkit-text-stroke:0.45px #3a50c6;">0xf987<span class="dt">...</span>3e41</div>
<div id="l_id" class="t" style="left:429.30px;top:433.01px;font-size:11px;font-weight:400;color:#252a5e;font-family:'Liberation Sans',sans-serif;letter-spacing:0.000px;-webkit-text-stroke:0.7px #252a5e;">ID</div>
<div id="v_id" class="t" style="left:429.10px;top:452.01px;font-size:10.6px;font-weight:400;color:#6b6e76;font-family:'Liberation Sans',sans-serif;letter-spacing:0.500px;-webkit-text-stroke:0.4px #6b6e76;">938513<span class="dt">...</span>1599</div>
<div id="l_addr" class="t" style="left:430.30px;top:492.00px;font-size:11px;font-weight:400;color:#252a5e;font-family:'Liberation Sans',sans-serif;letter-spacing:-0.167px;-webkit-text-stroke:0.7px #252a5e;">Address</div>
<div id="v_addr" class="t" style="left:454.60px;top:513.00px;font-size:10.8px;font-weight:400;color:#3a50c6;font-family:'Liberation Sans',sans-serif;letter-spacing:0.417px;-webkit-text-stroke:0.45px #3a50c6;">0xC3bC<span class="dt">...</span>20ad</div>
<div id="l_gas" class="t" style="left:429.30px;top:556.01px;font-size:11px;font-weight:400;color:#252a5e;font-family:'Liberation Sans',sans-serif;letter-spacing:0.125px;-webkit-text-stroke:0.7px #252a5e;">Gas limit</div>
<div id="v_gas" class="t" style="left:429.30px;top:574.01px;font-size:11.5px;font-weight:400;color:#1f2023;font-family:'Liberation Sans',sans-serif;letter-spacing:-0.250px;-webkit-text-stroke:0.2px #1f2023;">1,000,000</div>
<div id="l_type" class="t" style="left:772.00px;top:433.01px;font-size:11px;font-weight:400;color:#252a5e;font-family:'Liberation Sans',sans-serif;letter-spacing:0.333px;-webkit-text-stroke:0.7px #252a5e;">Type</div>
<div id="v_type" class="t" style="left:772.00px;top:452.00px;font-size:11.5px;font-weight:400;color:#1f2023;font-family:'Liberation Sans',sans-serif;letter-spacing:0.000px;-webkit-text-stroke:0.2px #1f2023;">Custom</div>
<div id="l_chk" class="t" style="left:772.00px;top:493.00px;font-size:11px;font-weight:400;color:#252a5e;font-family:'Liberation Sans',sans-serif;letter-spacing:-0.056px;-webkit-text-stroke:0.7px #252a5e;">Check data (Base16)</div>
<div id="ph" class="t" style="left:786.00px;top:524.01px;font-size:11px;font-weight:400;color:#a8aab0;font-family:'Liberation Sans',sans-serif;letter-spacing:0.000px;-webkit-text-stroke:0.2px #a8aab0;">0x</div>
<div id="history" class="t" style="left:53.40px;top:657.00px;font-size:25.5px;font-weight:700;color:#1c2561;font-family:'Liberation Sans',sans-serif;letter-spacing:-0.300px;transform:scaleX(0.9484);transform-origin:0 0;">History</div>
<div id="th_date" class="t" style="left:73.00px;top:724.01px;font-size:11px;font-weight:400;color:#252a5e;font-family:'Liberation Sans',sans-serif;letter-spacing:-0.333px;-webkit-text-stroke:0.7px #252a5e;">Date</div>
<div id="th_date_u" class="t" style="left:103.40px;top:724.01px;font-size:11px;font-weight:400;color:#6b6e76;font-family:'Liberation Sans',sans-serif;letter-spacing:0.000px;-webkit-text-stroke:0.2px #6b6e76;">UTC</div>
<div id="th_tx" class="t" style="left:352.40px;top:724.00px;font-size:11px;font-weight:400;color:#252a5e;font-family:'Liberation Sans',sans-serif;letter-spacing:0.133px;-webkit-text-stroke:0.7px #252a5e;">Transaction hash</div>
<div id="th_act" class="t" style="left:527.70px;top:724.00px;font-size:11px;font-weight:400;color:#252a5e;font-family:'Liberation Sans',sans-serif;letter-spacing:0.417px;-webkit-text-stroke:0.7px #252a5e;">Activity type</div>
<div id="th_amt" class="t" style="left:682.00px;top:724.00px;font-size:11px;font-weight:400;color:#252a5e;font-family:'Liberation Sans',sans-serif;letter-spacing:0.400px;-webkit-text-stroke:0.7px #252a5e;">Amount</div>
<div id="th_amt_u" class="t" style="left:729.00px;top:724.00px;font-size:11px;font-weight:400;color:#6b6e76;font-family:'Liberation Sans',sans-serif;letter-spacing:-0.000px;-webkit-text-stroke:0.2px #6b6e76;">LINK</div>
<div id="th_bal" class="t" style="left:901.70px;top:724.00px;font-size:11px;font-weight:400;color:#252a5e;font-family:'Liberation Sans',sans-serif;letter-spacing:-0.167px;-webkit-text-stroke:0.7px #252a5e;">Balance</div>
<div id="th_bal_u" class="t" style="left:948.30px;top:724.00px;font-size:11px;font-weight:400;color:#6b6e76;font-family:'Liberation Sans',sans-serif;letter-spacing:0.000px;-webkit-text-stroke:0.2px #6b6e76;">LINK</div>
<div id="showing" class="t" style="left:501.90px;top:1034.00px;font-size:12px;font-weight:400;color:#5d6068;font-family:'Liberation Sans',sans-serif;letter-spacing:0.308px;-webkit-text-stroke:0.2px #5d6068;">Showing 1 to 5 of 5 entries</div>
<div id="prev" class="t" style="left:73.80px;top:1035.01px;font-size:11px;font-weight:400;color:#c4c5ca;font-family:'Liberation Sans',sans-serif;letter-spacing:-0.333px;-webkit-text-stroke:0.7px #c4c5ca;">Prev</div>
<div id="next" class="t" style="left:1058.70px;top:1034.00px;font-size:11px;font-weight:400;color:#c4c5ca;font-family:'Liberation Sans',sans-serif;letter-spacing:0.333px;-webkit-text-stroke:0.7px #c4c5ca;">Next</div>
<div id="r0d0" class="t" style="left:74.00px;top:769.00px;font-size:11px;font-weight:400;color:#1f2023;font-family:'Liberation Sans',sans-serif;letter-spacing:0.000px;-webkit-text-stroke:0.3px #1f2023;">September</div>
<div id="r0d1" class="t" style="left:135.80px;top:769.00px;font-size:11px;font-weight:400;color:#1f2023;font-family:'Liberation Sans',sans-serif;letter-spacing:0.000px;-webkit-text-stroke:0.3px #1f2023;">27,</div>
<div id="r0d2" class="t" style="left:160.80px;top:769.00px;font-size:11px;font-weight:400;color:#1f2023;font-family:'Liberation Sans',sans-serif;letter-spacing:0.000px;-webkit-text-stroke:0.3px #1f2023;">2023</div>
<div id="r0d3" class="t" style="left:192.20px;top:769.00px;font-size:11px;font-weight:400;color:#1f2023;font-family:'Liberation Sans',sans-serif;letter-spacing:0.000px;-webkit-text-stroke:0.3px #1f2023;">at</div>
<div id="r0d4" class="t" style="left:208.00px;top:769.00px;font-size:11px;font-weight:400;color:#1f2023;font-family:'Liberation Sans',sans-serif;letter-spacing:0.750px;-webkit-text-stroke:0.3px #1f2023;">09:24</div>
<div id="r0h" class="t" style="left:352.40px;top:771.01px;font-size:10.3px;font-weight:400;color:#3a50c6;font-family:'Liberation Sans',sans-serif;letter-spacing:0.750px;-webkit-text-stroke:0.25px #3a50c6;">0×5fd6<span class="dt">...</span>5ece</div>
<div id="r0a" class="t" style="left:526.70px;top:769.00px;font-size:11px;font-weight:400;color:#6b6e76;font-family:'Liberation Sans',sans-serif;letter-spacing:0.071px;white-space:pre;-webkit-text-stroke:0.2px #6b6e76;">Perform  Upkeep</div>
<div id="r0m" class="t" style="left:681.20px;top:770.01px;font-size:10.2px;font-weight:400;color:#55575e;font-family:'Liberation Sans',sans-serif;letter-spacing:0.650px;-webkit-text-stroke:0.2px #55575e;">-0<span class="d1">.</span>010104819083665676</div>
<div id="r0b" class="t" style="left:901.70px;top:770.01px;font-size:10.2px;font-weight:400;color:#55575e;font-family:'Liberation Sans',sans-serif;letter-spacing:0.588px;-webkit-text-stroke:0.2px #55575e;">0<span class="d1">.</span>9595767505655667</div>
<div id="r1d0" class="t" style="left:74.00px;top:823.01px;font-size:11px;font-weight:400;color:#1f2023;font-family:'Liberation Sans',sans-serif;letter-spacing:0.000px;-webkit-text-stroke:0.3px #1f2023;">September</div>
<div id="r1d1" class="t" style="left:135.80px;top:823.01px;font-size:11px;font-weight:400;color:#1f2023;font-family:'Liberation Sans',sans-serif;letter-spacing:0.000px;-webkit-text-stroke:0.3px #1f2023;">27,</div>
<div id="r1d2" class="t" style="left:160.80px;top:823.01px;font-size:11px;font-weight:400;color:#1f2023;font-family:'Liberation Sans',sans-serif;letter-spacing:0.000px;-webkit-text-stroke:0.3px #1f2023;">2023</div>
<div id="r1d3" class="t" style="left:192.20px;top:823.01px;font-size:11px;font-weight:400;color:#1f2023;font-family:'Liberation Sans',sans-serif;letter-spacing:0.000px;-webkit-text-stroke:0.3px #1f2023;">at</div>
<div id="r1d4" class="t" style="left:208.00px;top:823.01px;font-size:11px;font-weight:400;color:#1f2023;font-family:'Liberation Sans',sans-serif;letter-spacing:0.750px;-webkit-text-stroke:0.3px #1f2023;">09:21</div>
<div id="r1h" class="t" style="left:352.40px;top:825.01px;font-size:10.3px;font-weight:400;color:#3a50c6;font-family:'Liberation Sans',sans-serif;letter-spacing:0.833px;-webkit-text-stroke:0.25px #3a50c6;">0xb6f3<span class="dt">...</span>03a5</div>
<div id="r1a" class="t" style="left:526.70px;top:823.00px;font-size:11px;font-weight:400;color:#6b6e76;font-family:'Liberation Sans',sans-serif;letter-spacing:0.071px;white-space:pre;-webkit-text-stroke:0.2px #6b6e76;">Perform  Upkeep</div>
<div id="r1m" class="t" style="left:681.20px;top:823.01px;font-size:10.2px;font-weight:400;color:#55575e;font-family:'Liberation Sans',sans-serif;letter-spacing:0.750px;-webkit-text-stroke:0.2px #55575e;">-0<span class="d1">.</span>010111172991055394</div>
<div id="r1b" class="t" style="left:901.70px;top:823.01px;font-size:10.2px;font-weight:400;color:#55575e;font-family:'Liberation Sans',sans-serif;letter-spacing:0.588px;-webkit-text-stroke:0.2px #55575e;">0<span class="d1">.</span>9696815696492324</div>
<div id="r2d0" class="t" style="left:74.00px;top:876.00px;font-size:11px;font-weight:400;color:#1f2023;font-family:'Liberation Sans',sans-serif;letter-spacing:0.000px;-webkit-text-stroke:0.3px #1f2023;">September</div>
<div id="r2d1" class="t" style="left:135.80px;top:876.00px;font-size:11px;font-weight:400;color:#1f2023;font-family:'Liberation Sans',sans-serif;letter-spacing:0.000px;-webkit-text-stroke:0.3px #1f2023;">27,</div>
<div id="r2d2" class="t" style="left:160.80px;top:876.00px;font-size:11px;font-weight:400;color:#1f2023;font-family:'Liberation Sans',sans-serif;letter-spacing:0.000px;-webkit-text-stroke:0.3px #1f2023;">2023</div>
<div id="r2d3" class="t" style="left:192.20px;top:876.00px;font-size:11px;font-weight:400;color:#1f2023;font-family:'Liberation Sans',sans-serif;letter-spacing:0.000px;-webkit-text-stroke:0.3px #1f2023;">at</div>
<div id="r2d4" class="t" style="left:208.00px;top:876.00px;font-size:11px;font-weight:400;color:#1f2023;font-family:'Liberation Sans',sans-serif;letter-spacing:0.750px;-webkit-text-stroke:0.3px #1f2023;">09:20</div>
<div id="r2h" class="t" style="left:352.40px;top:878.01px;font-size:10.3px;font-weight:400;color:#3a50c6;font-family:'Liberation Sans',sans-serif;letter-spacing:0.917px;-webkit-text-stroke:0.25px #3a50c6;">0xbf21<span class="dt">...</span>dc3f</div>
<div id="r2a" class="t" style="left:526.70px;top:876.00px;font-size:11px;font-weight:400;color:#6b6e76;font-family:'Liberation Sans',sans-serif;letter-spacing:0.071px;white-space:pre;-webkit-text-stroke:0.2px #6b6e76;">Perform  Upkeep</div>
<div id="r2m" class="t" style="left:681.20px;top:877.01px;font-size:10.2px;font-weight:400;color:#55575e;font-family:'Liberation Sans',sans-serif;letter-spacing:0.650px;-webkit-text-stroke:0.2px #55575e;">-0<span class="d1">.</span>010100055691605218</div>
<div id="r2b" class="t" style="left:901.70px;top:877.01px;font-size:10.2px;font-weight:400;color:#55575e;font-family:'Liberation Sans',sans-serif;letter-spacing:0.588px;-webkit-text-stroke:0.2px #55575e;">0<span class="d1">.</span>9797927426402877</div>
<div id="r3d0" class="t" style="left:74.00px;top:929.00px;font-size:11px;font-weight:400;color:#1f2023;font-family:'Liberation Sans',sans-serif;letter-spacing:0.000px;-webkit-text-stroke:0.3px #1f2023;">September</div>
<div id="r3d1" class="t" style="left:135.80px;top:929.00px;font-size:11px;font-weight:400;color:#1f2023;font-family:'Liberation Sans',sans-serif;letter-spacing:0.000px;-webkit-text-stroke:0.3px #1f2023;">27,</div>
<div id="r3d2" class="t" style="left:160.80px;top:929.00px;font-size:11px;font-weight:400;color:#1f2023;font-family:'Liberation Sans',sans-serif;letter-spacing:0.000px;-webkit-text-stroke:0.3px #1f2023;">2023</div>
<div id="r3d3" class="t" style="left:192.20px;top:929.00px;font-size:11px;font-weight:400;color:#1f2023;font-family:'Liberation Sans',sans-serif;letter-spacing:0.000px;-webkit-text-stroke:0.3px #1f2023;">at</div>
<div id="r3d4" class="t" style="left:208.00px;top:929.00px;font-size:11px;font-weight:400;color:#1f2023;font-family:'Liberation Sans',sans-serif;letter-spacing:0.750px;-webkit-text-stroke:0.3px #1f2023;">09:19</div>
<div id="r3h" class="t" style="left:352.40px;top:931.01px;font-size:10.3px;font-weight:400;color:#3a50c6;font-family:'Liberation Sans',sans-serif;letter-spacing:0.750px;-webkit-text-stroke:0.25px #3a50c6;">0×1f1b<span class="dt">...</span>84da</div>
<div id="r3a" class="t" style="left:526.70px;top:929.00px;font-size:11px;font-weight:400;color:#6b6e76;font-family:'Liberation Sans',sans-serif;letter-spacing:0.071px;white-space:pre;-webkit-text-stroke:0.2px #6b6e76;">Perform  Upkeep</div>
<div id="r3m" class="t" style="left:681.20px;top:930.01px;font-size:10.2px;font-weight:400;color:#55575e;font-family:'Liberation Sans',sans-serif;letter-spacing:0.650px;-webkit-text-stroke:0.2px #55575e;">-0<span class="d1">.</span>010107201668107043</div>
<div id="r3b" class="t" style="left:901.70px;top:930.01px;font-size:10.2px;font-weight:400;color:#55575e;font-family:'Liberation Sans',sans-serif;letter-spacing:0.592px;-webkit-text-stroke:0.2px #55575e;">0<span class="d1">.</span>989892798331893</div>
<div id="r4d0" class="t" style="left:74.00px;top:982.01px;font-size:11px;font-weight:400;color:#1f2023;font-family:'Liberation Sans',sans-serif;letter-spacing:0.000px;-webkit-text-stroke:0.3px #1f2023;">September</div>
<div id="r4d1" class="t" style="left:135.80px;top:982.01px;font-size:11px;font-weight:400;color:#1f2023;font-family:'Liberation Sans',sans-serif;letter-spacing:0.000px;-webkit-text-stroke:0.3px #1f2023;">27,</div>
<div id="r4d2" class="t" style="left:160.80px;top:982.01px;font-size:11px;font-weight:400;color:#1f2023;font-family:'Liberation Sans',sans-serif;letter-spacing:0.000px;-webkit-text-stroke:0.3px #1f2023;">2023</div>
<div id="r4d3" class="t" style="left:192.20px;top:982.01px;font-size:11px;font-weight:400;color:#1f2023;font-family:'Liberation Sans',sans-serif;letter-spacing:0.000px;-webkit-text-stroke:0.3px #1f2023;">at</div>
<div id="r4d4" class="t" style="left:208.00px;top:982.01px;font-size:11px;font-weight:400;color:#1f2023;font-family:'Liberation Sans',sans-serif;letter-spacing:0.750px;-webkit-text-stroke:0.3px #1f2023;">09:18</div>
<div id="r4h" class="t" style="left:352.40px;top:985.00px;font-size:10.3px;font-weight:400;color:#3a50c6;font-family:'Liberation Sans',sans-serif;letter-spacing:0.750px;-webkit-text-stroke:0.25px #3a50c6;">0xf987<span class="dt">...</span>3e41</div>
<div id="r4a" class="t" style="left:526.70px;top:983.01px;font-size:11px;font-weight:400;color:#6b6e76;font-family:'Liberation Sans',sans-serif;letter-spacing:-0.000px;white-space:pre;-webkit-text-stroke:0.2px #6b6e76;">Fund  Upkeep</div>
<div id="r4m" class="t" style="left:681.20px;top:983.00px;font-size:10.2px;font-weight:400;color:#55575e;font-family:'Liberation Sans',sans-serif;letter-spacing:0.000px;-webkit-text-stroke:0.2px #55575e;">1</div>
<div id="r4b" class="t" style="left:901.70px;top:983.00px;font-size:10.2px;font-weight:400;color:#55575e;font-family:'Liberation Sans',sans-serif;letter-spacing:0.000px;-webkit-text-stroke:0.2px #55575e;">1</div>
</body></html>
